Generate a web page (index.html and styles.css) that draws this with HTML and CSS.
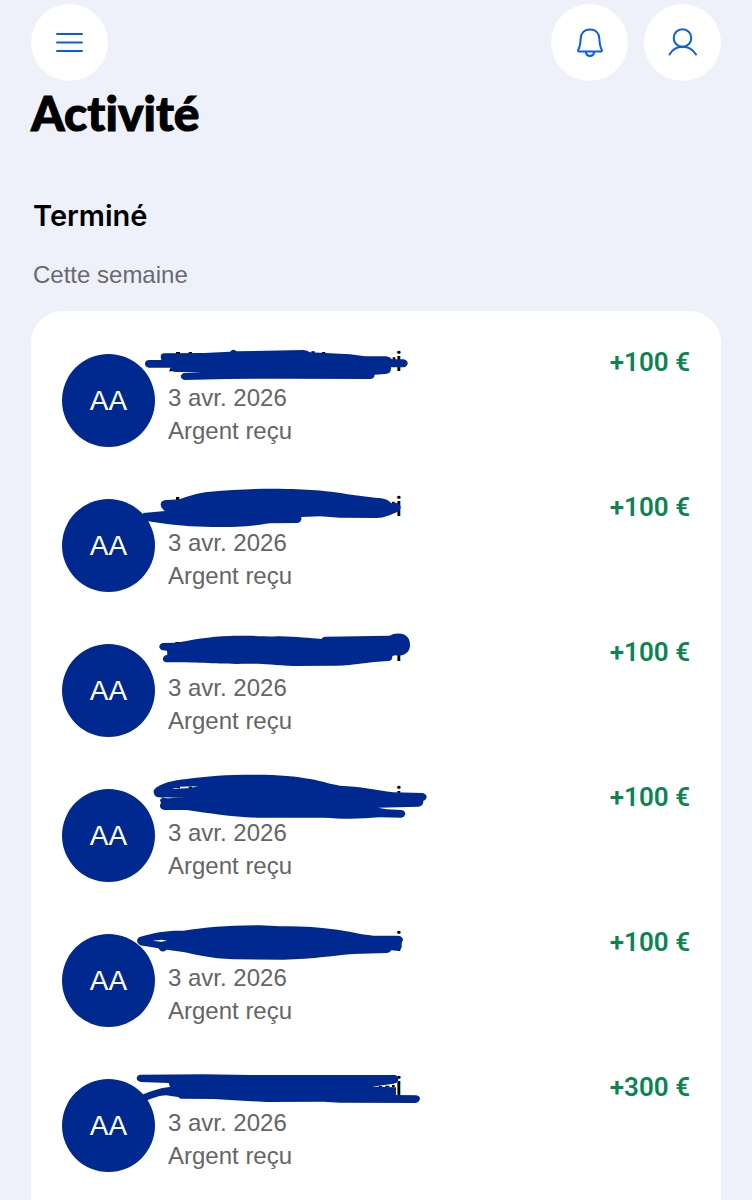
FILE: index.html
```html
<!doctype html>
<html lang="fr">
  <head>
    <meta charset="utf-8">
    <meta name="viewport" content="width=device-width, initial-scale=1">
    <title>Activité</title>
    <link rel="stylesheet" href="styles.css">
  </head>
  <body>
    <header class="topbar">
      <button class="round-button" type="button" aria-label="Menu">
        <svg viewBox="0 0 36 36"><path d="M5 9H30M5 17.500H30M5 26H30"/></svg>
      </button>
      <div class="topbar-actions">
        <button class="round-button" type="button" aria-label="Notifications">
          <svg viewBox="0 0 36 36"><path d="M18 4.500C12 4.500 8.800 8.500 8.600 14C8.400 19 7.800 22 6.200 25Q5.700 26.500 7 26.500H29Q30.300 26.500 29.800 25C28.200 22 27.600 19 27.400 14C27.200 8.500 24 4.500 18 4.500ZM13.800 27C14.500 32.200 21.500 32.200 22.200 27"/></svg>
        </button>
        <button class="round-button" type="button" aria-label="Profil">
          <svg viewBox="0 0 36 36"><circle cx="17.500" cy="13" r="8.800"/><path d="M4.500 29.500C10.500 19.200 24.500 19.200 31 29.500"/></svg>
        </button>
      </div>
    </header>

    <main>
      <h1 class="title">Activité</h1>
      <h2 class="section">Terminé</h2>
      <p class="period">Cette semaine</p>

      <ul class="card">
        <li class="row">
          <span class="avatar">AA</span>
          <div class="details">
            <div class="name">i</div>
            <div>3 avr. 2026</div>
            <div>Argent reçu</div>
          </div>
          <div class="amount">+100 €</div>
          <svg class="mask" viewBox="0 0 1170 390" aria-hidden="true">
            <path class="ink" d="M378 66h12v10h-12zM416 66h10v10h-10zM784 64h10v10h-10zM816 66h10v10h-10zM1028 82h8v12h-8zM362 114h10v4l-4 6h-11z"/>
            <path d="M296 90H334Q328 71 342 70L462 69L540 65Q550 54 560 64L760 60Q772 61 780 67L900 73L945 79H1008Q1020 80 1026 88H1060Q1074 91 1073 101Q1071 112 1056 112H1023Q1024 132 1006 132L974 134Q973 147 960 147L700 146L530 147L404 150Q390 146 393 136L400 129L455 126H378Q364 126 362 113H296Q284 110 285 101Q285 92 296 90Z"/>
          </svg>
        </li>
        <li class="row">
          <span class="avatar">AA</span>
          <div class="details">
            <div class="name">i</div>
            <div>3 avr. 2026</div>
            <div>Argent reçu</div>
          </div>
          <div class="amount">+100 €</div>
          <svg class="mask" viewBox="0 0 1170 390" aria-hidden="true">
            <path class="ink" d="M378 66h10v10h-10zM1026 80h8v12h-8z"/>
            <path d="M280 114L345 108Q331 100 332 87Q334 75 350 75L388 73C420 62 440 54 480 50C560 43 640 40 710 42C800 43 850 51 910 60L975 68Q1002 69 1012 75L1025 85Q1046 79 1052 95Q1052 107 1040 112C1020 120 1004 129 980 129L870 128L810 124L754 126Q756 142 742 144L660 145C600 154 560 156 500 156C440 157 370 151 294 139L270 135Z"/>
          </svg>
        </li>
        <li class="row">
          <span class="avatar">AA</span>
          <div class="details">
            <div class="name">i</div>
            <div>3 avr. 2026</div>
            <div>Argent reçu</div>
          </div>
          <div class="amount">+100 €</div>
          <svg class="mask" viewBox="0 0 1170 390" aria-hidden="true">
            <path class="ink" d="M376 66h16v8h-16z"/>
            <path d="M338 69L380 68C420 61 480 49 540 48C610 46 640 50 690 49C740 51 780 54 814 57Q818 50 828 50L1018 47Q1034 38 1054 41C1074 45 1081 60 1080 77C1079 99 1059 110 1036 106L1027 108Q1028 123 1014 123C960 125 910 136 860 137L730 138C650 133 610 129 560 132C490 131 440 127 348 127Q337 123 339 113Q342 106 352 104L351 92L338 91Q327 87 328 78Q330 70 338 69Z"/>
          </svg>
        </li>
        <li class="row">
          <span class="avatar">AA</span>
          <div class="details">
            <div class="name">i</div>
            <div>3 avr. 2026</div>
            <div>Argent reçu</div>
          </div>
          <div class="amount">+100 €</div>
          <svg class="mask" viewBox="0 0 1170 390" aria-hidden="true">
            <path d="M314 72C330 56 370 45 410 42C470 33 530 29 610 29C690 29 740 34 780 42C820 49 830 55 870 62C930 65 980 74 1030 82L1118 84Q1131 88 1130 97Q1128 106 1120 107Q1121 124 1106 125L984 128L1010 133L1054 135Q1067 138 1066 148Q1063 157 1054 158L990 157C920 163 870 161 820 158L620 158C540 155 480 145 410 135L342 135Q329 132 330 121L333 112Q325 103 338 98L320 96Q305 84 314 72Z"/>
            <path class="gap" d="M366 72L390 65L444 64L420 69ZM334 97L402 98L350 100Z"/>
            <path class="ink" d="M380 66h10v4h-10zM416 65h10v4h-10zM364 98h28v2h-28z"/>
          </svg>
        </li>
        <li class="row">
          <span class="avatar">AA</span>
          <div class="details">
            <div class="name">i</div>
            <div>3 avr. 2026</div>
            <div>Argent reçu</div>
          </div>
          <div class="amount">+100 €</div>
          <svg class="mask" viewBox="0 0 1170 390" aria-hidden="true">
            <path d="M267 82C300 71 330 65 370 62L400 62C470 52 530 46 630 46L690 49C750 48 800 51 850 58C900 64 930 74 970 77H1044Q1060 80 1059 91Q1054 96 1055 106Q1057 121 1040 122L1024 121Q1019 130 1010 129L910 132C860 136 790 147 700 149L550 148C480 145 440 134 400 126L350 119Q335 132 325 115L270 106Q254 93 267 82Z"/>
            <path class="gap" d="M308 92L334 89L352 92L334 95Z"/>
          </svg>
        </li>
        <li class="row">
          <span class="avatar">AA</span>
          <div class="details">
            <div class="name">i</div>
            <div>3 avr. 2026</div>
            <div>Argent reçu</div>
          </div>
          <div class="amount">+300 €</div>
          <svg class="mask" viewBox="0 0 1170 390" aria-hidden="true">
            <path d="M270 59L460 58L600 60L1034 60Q1046 63 1045 73Q1045 86 1020 88L966 95L1038 97V120L1099 121Q1110 123 1110 132Q1107 143 1097 144L870 143L820 140L650 141L490 132L392 131L384 126L348 121C330 121 306 130 284 139L266 122C290 115 325 98 360 96L356 84L272 81Q260 78 260 70Q261 61 270 59Z"/>
            <path class="ink" d="M986 93h10v3h-10zM1006 92h12v4h-12zM1026 90h8v6h-8z"/>
          </svg>
        </li>
      </ul>
    </main>
  </body>
</html>
```

FILE: styles.css
```css
* { box-sizing: border-box }

body {
  margin: 0;
  padding: 4px 31px 0;
  background: #eef1fa;
  color: #000;
  font: 24px/33px "Liberation Sans", Arial, sans-serif;
}

.topbar {
  display: flex;
  justify-content: space-between;
}
.topbar-actions {
  display: flex;
  gap: 16px;
}

.round-button {
  display: flex;
  align-items: center;
  justify-content: center;
  width: 77px;
  height: 77px;
  padding: 0;
  border: 0;
  border-radius: 50%;
  background: #fff;
}
.round-button svg {
  width: 36px;
  height: 36px;
  fill: none;
  stroke: #0b5fdc;
  stroke-width: 2;
  stroke-linecap: round;
  stroke-linejoin: round;
}

.title {
  margin: 0;
  font: 900 48px/64px Lato, sans-serif;
  font-variant-ligatures: none;
  -webkit-text-stroke: 1px #000;
}
.section {
  margin: 51px 2px 22px;
  font: 600 29px/40px Inter, sans-serif;
}
.period {
  margin: 0 2px 20px;
  color: #6a6a6e;
}

.card {
  display: flex;
  flex-direction: column;
  gap: 41px;
  margin: 0;
  padding: 32px 31px 28px;
  border-radius: 32px 32px 0 0;
  background: #fff;
  list-style: none;
}

.row {
  display: flex;
  align-items: flex-end;
  gap: 13px;
  position: relative;
}

.avatar {
  display: flex;
  align-items: center;
  justify-content: center;
  width: 93px;
  height: 93px;
  border-radius: 50%;
  background: #00298f;
  color: #fff;
  font-size: 28px;
}

.details {
  flex: 1;
  color: #656565;
}
.name {
  width: 234px;
  color: #000;
  font: 500 26px/38px Inter, sans-serif;
  text-align: right;
}

.amount {
  align-self: flex-start;
  color: #0a8452;
  font: 600 26px/38px Roboto, sans-serif;
}

/* scribble over the name, drawn above the whole row */
.mask {
  position: absolute;
  top: -13px;
  left: -12px;
  width: 390px;
  height: 130px;
  fill: #00298f;
  pointer-events: none;
}
.mask .ink { fill: #000 }
.mask .gap { fill: #fff }
```
